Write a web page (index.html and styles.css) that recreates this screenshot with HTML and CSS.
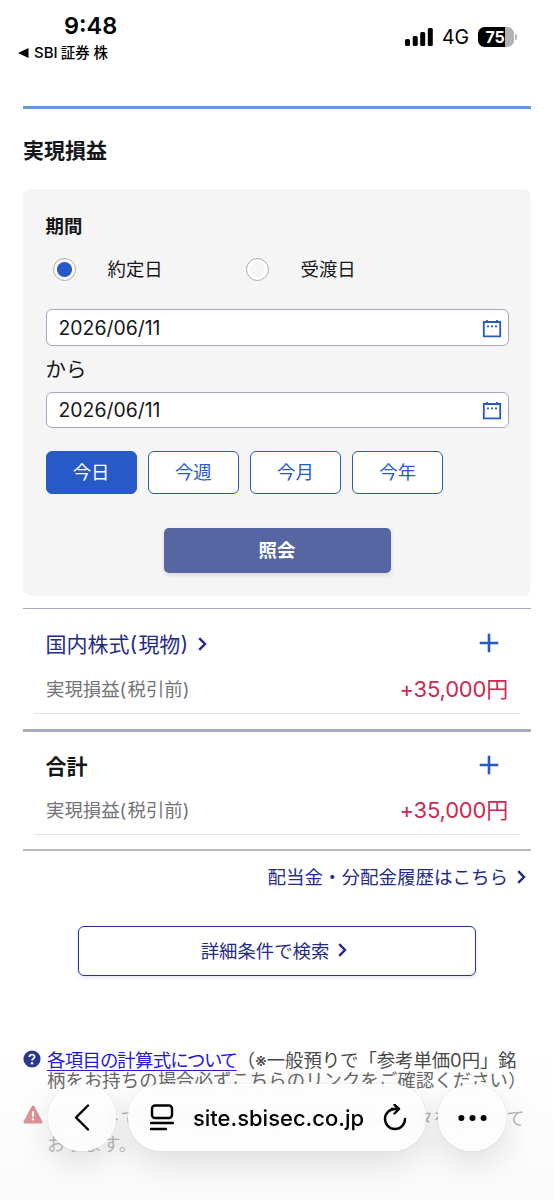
FILE: index.html
```html
<!DOCTYPE html>
<html lang="ja">
<head>
<meta charset="utf-8">
<title>実現損益</title>
<link rel="stylesheet" href="styles.css">
</head>
<body>
<header class="status">
  <div class="status-left">
    <div class="clock">9:48</div>
    <div class="back-app"><svg width="11" height="10" viewBox="0 0 11 10"><path d="M0 5 10.5 0v10z"/></svg><span>SBI<span class="app-jp">証券 株</span></span></div>
  </div>
  <div class="status-right">
    <svg class="signal" width="28" height="18" viewBox="0 0 28 18"><rect x="0" y="11" width="5" height="7" rx="1.5"/><rect x="7.7" y="8" width="5" height="10" rx="1.5"/><rect x="15.2" y="4" width="5" height="14" rx="1.5"/><rect x="22.8" y="0" width="5" height="18" rx="1.5"/></svg>
    <span class="network">4G</span>
    <div class="battery">75</div><i class="battery-tip"></i>
  </div>
</header>
<main class="page">
  <h1 class="title">実現損益</h1>
  <form class="card">
    <h2 class="label">期間</h2>
    <div class="radios">
      <label class="radio"><i class="dot on"></i><span>約定日</span></label>
      <label class="radio"><i class="dot"></i><span>受渡日</span></label>
    </div>
    <div class="date">2026/06/11<svg width="20" height="18" viewBox="0 0 20 18"><path d="M1.8 2h16.4v14.4H1.8zM5 0v3M15 0v3"/><path class="dots" d="M5 6.4h2M9 6.4h2M13 6.4h2"/></svg></div>
    <div class="from">から</div>
    <div class="date">2026/06/11<svg width="20" height="18" viewBox="0 0 20 18"><path d="M1.8 2h16.4v14.4H1.8zM5 0v3M15 0v3"/><path class="dots" d="M5 6.4h2M9 6.4h2M13 6.4h2"/></svg></div>
    <div class="presets">
      <span class="preset active">今日</span><span class="preset">今週</span><span class="preset">今月</span><span class="preset">今年</span>
    </div>
    <div class="submit">照会</div>
  </form>
  <section class="group">
    <div class="group-head"><a class="group-link">国内株式<span class="paren">(</span>現物<span class="paren">)</span><svg class="chev" width="9" height="14" viewBox="0 0 9 14"><path d="m1.2 1.2 5.8 5.8-5.8 5.8"/></svg></a><svg class="plus" width="20" height="20" viewBox="0 0 20 20"><path d="M10 .7v18.6M.7 10h18.6"/></svg></div>
    <div class="group-row"><span>実現損益<span class="paren">(</span>税引前<span class="paren">)</span></span><span class="amount">+35,000円</span></div>
  </section>
  <section class="group total">
    <div class="group-head"><b>合計</b><svg class="plus" width="20" height="20" viewBox="0 0 20 20"><path d="M10 .7v18.6M.7 10h18.6"/></svg></div>
    <div class="group-row"><span>実現損益<span class="paren">(</span>税引前<span class="paren">)</span></span><span class="amount">+35,000円</span></div>
  </section>
  <div class="history">配当金・分配金履歴はこちら<svg class="chev" width="9" height="14" viewBox="0 0 9 14"><path d="m1.2 1.2 5.8 5.8-5.8 5.8"/></svg></div>
  <div class="detail">詳細条件で検索<svg class="chev" width="9" height="14" viewBox="0 0 9 14"><path d="m1.2 1.2 5.8 5.8-5.8 5.8"/></svg></div>
  <div class="note">
    <svg width="18" height="18" viewBox="0 0 18 18"><circle cx="9" cy="9" r="8.6" fill="#25348a"/><path d="M6.4 7.1c0-3.4 5.2-3.3 5.2-.3 0 1.8-2.6 1.9-2.6 3.8" fill="none" stroke="#fff" stroke-width="1.8"/><circle cx="9" cy="13.2" r="1.2" fill="#fff"/></svg>
    <div><p class="line"><a class="formula">各項目の計算式について</a><span class="l1">（※一般預りで「参考単価0円」銘</span></p><p class="line l2">柄をお持ちの場合必ずこちらのリンクをご確認ください）</p></div>
  </div>
  <div class="note warn">
    <svg width="20" height="19" viewBox="0 0 20 19"><path d="M10 2 18 17H2z" fill="#d97f82" stroke="#d97f82" stroke-width="3" stroke-linejoin="round"/><path d="M10 6.2v5.6" stroke="#fff" stroke-width="2"/><circle cx="10" cy="14.2" r="1.2" fill="#fff"/></svg>
    <div><p class="line">当サイトでの実現損益は約定日以降分のデータを表示して</p><p class="line">おります。</p></div>
  </div>
</main>
<div class="shade"></div>
<nav class="browser">
  <div class="round"><svg width="16" height="27" viewBox="0 0 16 27"><path d="M14 1.5 2 13.5l12 12"/></svg></div>
  <div class="address">
    <svg width="24" height="27" viewBox="0 0 24 27"><rect x="2" y="1.5" width="20" height="12.5" rx="3"/><path d="M1 19h22M1 25h15"/></svg>
    <span>site.sbisec.co.jp</span>
    <svg class="reload" width="24" height="27" viewBox="0 0 24 27"><path d="M12 5a10 10 0 1 0 10 10M8.5 5H16M11.5 .8 16 5l-4.5 4.5"/></svg>
  </div>
  <div class="round"><svg width="29" height="8" viewBox="0 0 29 8"><g fill="#000" stroke="none"><circle cx="3.4" cy="4" r="3"/><circle cx="14.5" cy="4" r="3"/><circle cx="25.6" cy="4" r="3"/></g></svg></div>
</nav>
</body>
</html>
```
FILE: styles.css
```css
* { box-sizing: border-box; margin: 0; padding: 0; }
body {
  position: relative;
  width: 554px;
  height: 1200px;
  overflow: hidden;
  background: #fff;
  color: #15161a;
  font-family: Inter, "Noto Sans CJK JP", sans-serif;
  font-size: 18.4px;
}
svg { flex: none; display: block; }
.status { height: 106px; display: flex; justify-content: space-between; padding: 11px 37px 0 18px; color: #000; }
.clock { margin-left: 46px; font-size: 23.5px; font-weight: 600; line-height: 30px; }
.back-app { display: flex; align-items: center; gap: 5px; margin-top: 1px; font-size: 15px; font-weight: 500; line-height: 22px; }
.app-jp { font-size: 14.5px; margin-left: 3px; }
.status-right { display: flex; align-items: center; height: 20px; margin-top: 16px; }
.network { margin-left: 9px; font-size: 19.5px; width: 36px; }
.battery { width: 36px; height: 20px; padding-right: 2px; border-radius: 6.5px; background: linear-gradient(90deg, #000 27px, #b2b2b2 27px); color: #fff; font-size: 16px; font-weight: 700; line-height: 20px; text-align: center; letter-spacing: -.3px; }
.battery-tip { width: 2px; height: 6px; margin-left: 1px; border-radius: 0 2px 2px 0; background: #b2b2b2; }
.page { margin: 0 23px; border-top: 3px solid #5f9bd8; }
.title { height: 80px; line-height: 83px; font-size: 21px; font-weight: 600; }
.card { height: 407px; padding: 22px 22.5px 0; border-radius: 8px; background: #f5f5f5; }
.label { font-size: 18.4px; font-weight: 600; line-height: 30px; }
.radios { display: flex; height: 56px; align-items: center; }
.radio { display: flex; width: 193px; padding-left: 7px; align-items: center; gap: 32px; }
.radio span { margin-top: -2px; }
.dot { width: 23px; height: 23px; border: 1.5px solid #a9a9bb; border-radius: 50%; background: radial-gradient(circle, #f5f5f5 7px, #fff 8px); }
.dot.on { background: radial-gradient(circle, #2759c7 7px, #fff 8px); }
.date { display: flex; align-items: center; justify-content: space-between; height: 37px; margin-top: 12px; padding: 0 6px 0 12px; border: 1.5px solid #a5a9bd; border-radius: 6px; background: #fff; font-size: 19.4px; }
.date svg { fill: none; stroke: #2759c7; stroke-width: 1.8; margin-top: 2px; }
.dots { stroke-width: 1.8; }
.from { height: 46px; line-height: 48px; font-size: 20.5px; }
.from + .date { margin-top: 0; height: 36px; }
.presets { display: flex; gap: 11px; margin-top: 23px; }
.preset { width: 91.2px; height: 43px; border: 1.5px solid #2759c7; border-radius: 6px; background: #fff; color: #2759c7; line-height: 41px; text-align: center; }
.preset.active { background: #2759c7; color: #fff; }
.submit { width: 227px; height: 45px; margin: 34px auto 0; border-radius: 5px; background: #5566a3; color: #fff; font-weight: 600; line-height: 44px; text-align: center; box-shadow: 0 2px 4px #0002; }
.group { margin-top: 12px; height: 121px; padding: 0 11px; border-top: 1.5px solid #a5abba; }
.group.total { margin-top: 0; height: 122px; border-top: 3px solid #a5abba; border-bottom: 2px solid #b5bac5; }
.group-head { display: flex; justify-content: space-between; align-items: center; height: 67px; padding: 1px 21.5px 0 11.5px; font-size: 21px; }
.total .group-head { height: 65px; padding-top: 1px; }
.group-head b { font-weight: 600; }
.group-link { display: flex; align-items: center; color: #1f2b87; }
.group-link .chev { margin-top: 2px; }
.paren { letter-spacing: 1.2px; }
.chev { fill: none; stroke: #1f2b87; stroke-width: 2.4; margin-left: 9px; }
.plus { stroke: #2759c7; stroke-width: 2.6; }
.group-row { display: flex; justify-content: space-between; align-items: center; height: 38px; padding: 0 12px 11px; border-bottom: 1.5px solid #e3e5ec; color: #717379; line-height: 27px; }
.amount { color: #cb2a50; font-size: 22px; letter-spacing: -.2px; }
.history { display: flex; justify-content: flex-end; align-items: center; height: 51px; padding: 0 5px 2px 0; color: #1f2b87; font-size: 18.5px; }
.history .chev { margin-top: 2px; }
.detail { display: flex; justify-content: center; align-items: center; width: 398px; height: 50px; margin: 24px auto 0; padding: 0 6px 2px 0; border: 1.5px solid #25348a; border-radius: 6px; color: #1f2b87; box-shadow: 0 2px 4px #24349a22; }
.note { display: flex; gap: 6px; margin-top: 74px; color: #444; white-space: nowrap; }
.line { height: 20px; line-height: 20px; }
.formula { color: #1a10dc; text-decoration: underline; text-underline-offset: 3px; font-feature-settings: "palt"; letter-spacing: -.65px; }
.l1 { letter-spacing: -.05px; }
.l2 { letter-spacing: .05px; color: #5c5c5c; }
.warn { margin-top: 15px; color: #aaa; gap: 4px; }
.warn .line { height: 27px; line-height: 27px; }
.warn .line + .line { line-height: 24px; }
.shade { position: absolute; left: 0; right: 0; bottom: 0; height: 150px; background: linear-gradient(#fff0, #f2f2f240 65%, #f8f8f8aa); }
.browser { position: absolute; left: 48px; top: 1084px; display: flex; gap: 12px; }
.round, .address { display: flex; align-items: center; justify-content: center; height: 67px; border: 2px solid #fffc; border-radius: 34px; background: #fdfdfdeb; backdrop-filter: blur(5px); box-shadow: 0 12px 34px #0000001f, 0 0 3px #00000014; }
.round { width: 68px; }
.address { width: 298px; justify-content: space-between; padding: 0 17px 0 20px; color: #000; font-size: 22px; font-weight: 500; }
.browser svg { fill: none; stroke: #000; stroke-width: 2.4; stroke-linecap: round; stroke-linejoin: round; }
```
